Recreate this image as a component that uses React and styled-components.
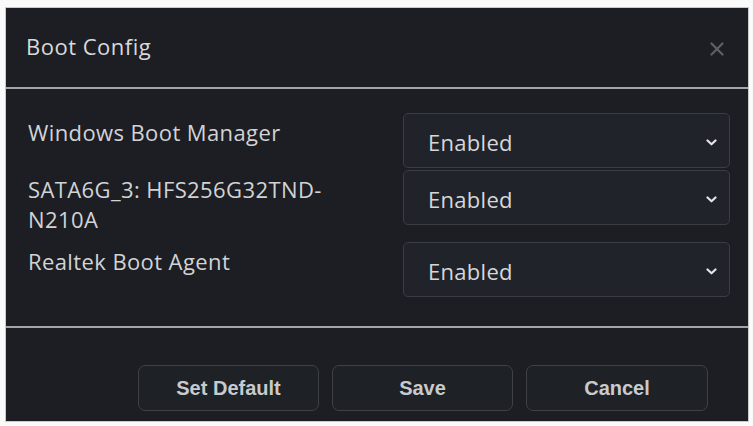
import React from "react";
import styled, { createGlobalStyle } from "styled-components";

const GlobalStyle = createGlobalStyle`
  html, body {
    margin: 0;
    padding: 0;
    background: #fafafa;
  }
  * {
    box-sizing: border-box;
  }
`;

const Page = styled.div`
  width: 753px;
  height: 426px;
  padding: 8px 5px 5px 6px;
`;

const Dialog = styled.div`
  width: 742px;
  height: 413px;
  background: #1c1e23;
  box-shadow: 0 0 0 1px #c9cacc;
  display: flex;
  flex-direction: column;
  font-family: "Open Sans", "Noto Sans", sans-serif;
  color: #d4d5d8;
`;

const Header = styled.div`
  height: 79px;
  display: flex;
  align-items: center;
  justify-content: space-between;
  padding: 0 24px 4px 20px;
`;

const Title = styled.h1`
  margin: 0;
  font-size: 22px;
  font-weight: 400;
  letter-spacing: 0.5px;
  color: #d8d9db;
`;

const CloseButton = styled.button`
  border: none;
  background: none;
  padding: 0;
  width: 15px;
  height: 15px;
  display: flex;
  align-items: center;
  justify-content: center;
  color: #5d6065;
  margin-top: 6px;
`;

const Divider = styled.div`
  height: 2px;
  background: #a2a4a8;
`;

const Body = styled.div`
  padding: 24px 18px 29px 22px;
  display: flex;
  flex-direction: column;
  gap: 2px;
`;

const Row = styled.div`
  display: flex;
  align-items: flex-start;
  justify-content: space-between;
`;

const Label = styled.div`
  width: 330px;
  padding: 4px 0 6px;
  font-size: 22px;
  line-height: 30px;
  letter-spacing: 0.4px;
  color: #d2d3d6;
`;

const SelectBox = styled.div`
  width: 327px;
  height: 55px;
  display: flex;
  align-items: center;
  justify-content: space-between;
  padding: 3px 12px 0 24px;
  background: #20232a;
  border: 1px solid #3a3d44;
  border-radius: 5px;
  font-size: 22px;
  letter-spacing: 0.3px;
  color: #d6d7da;
`;

const Footer = styled.div`
  flex: 1;
  display: flex;
  justify-content: flex-end;
  align-items: flex-start;
  gap: 13px;
  padding: 37px 40px 0 0;
`;

const Button = styled.button`
  width: ${(p) => p.$w || 181}px;
  height: 46px;
  background: #1e2126;
  border: 1px solid #3d4046;
  border-radius: 7px;
  font-family: "Liberation Sans", Arial, sans-serif;
  font-weight: 700;
  font-size: 20px;
  color: #c8cacd;
  padding: 0;
`;

const Chevron = () => (
  <svg width="11" height="7" viewBox="0 0 11 7" fill="none">
    <path d="M1.5 1.5 L5.5 5.3 L9.5 1.5" stroke="#e2e3e5" strokeWidth="2.2" strokeLinecap="round" strokeLinejoin="round" />
  </svg>
);

const CloseIcon = () => (
  <svg width="14" height="14" viewBox="0 0 14 14" fill="none">
    <path d="M1.5 1.5 L12.5 12.5 M12.5 1.5 L1.5 12.5" stroke="currentColor" strokeWidth="2.2" strokeLinecap="round" />
  </svg>
);

const entries = [
  { label: "Windows Boot Manager", value: "Enabled" },
  { label: "SATA6G_3: HFS256G32TND-N210A", value: "Enabled" },
  { label: "Realtek Boot Agent", value: "Enabled" },
];

export default function App() {
  return (
    <Page>
      <GlobalStyle />
      <Dialog>
        <Header>
          <Title>Boot Config</Title>
          <CloseButton aria-label="Close">
            <CloseIcon />
          </CloseButton>
        </Header>
        <Divider />
        <Body>
          {entries.map((e) => (
            <Row key={e.label}>
              <Label>{e.label}</Label>
              <SelectBox>
                <span>{e.value}</span>
                <Chevron />
              </SelectBox>
            </Row>
          ))}
        </Body>
        <Divider />
        <Footer>
          <Button>Set Default</Button>
          <Button>Save</Button>
          <Button $w={182}>Cancel</Button>
        </Footer>
      </Dialog>
    </Page>
  );
}
